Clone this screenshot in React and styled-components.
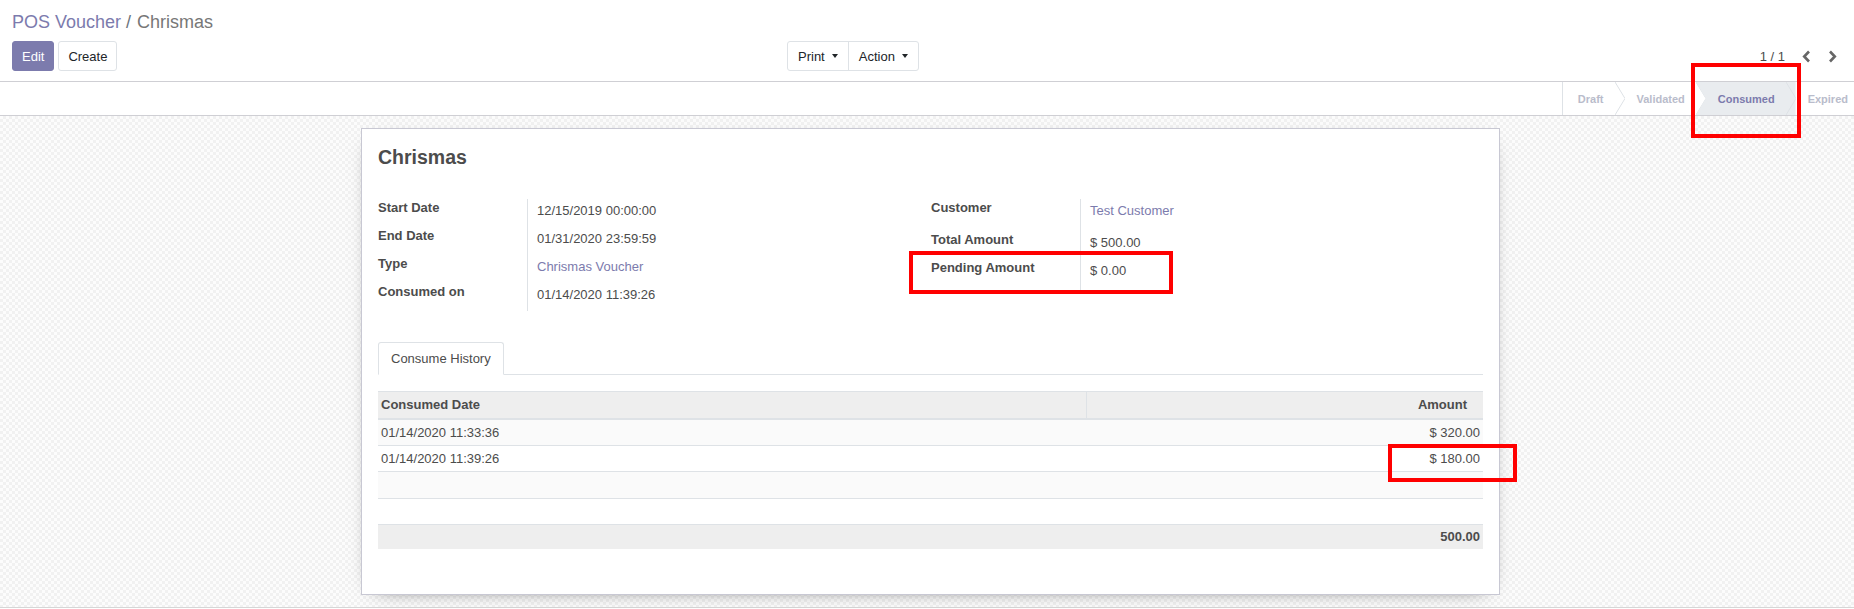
import styled, { createGlobalStyle } from "styled-components";

const GlobalStyle = createGlobalStyle`
  html, body {
    margin: 0;
    padding: 0;
    background: #fff;
  }
  body {
    font-family: "Liberation Sans", Arial, sans-serif;
    font-size: 13px;
    color: #4c4c4c;
  }
  * {
    box-sizing: border-box;
  }
`;

const leftFields = [
  { label: "Start Date", value: "12/15/2019 00:00:00" },
  { label: "End Date", value: "01/31/2020 23:59:59" },
  { label: "Type", value: "Chrismas Voucher", link: true },
  { label: "Consumed on", value: "01/14/2020 11:39:26" },
];

const rightFields = [
  { label: "Customer", value: "Test Customer", link: true, height: 32 },
  { label: "Total Amount", value: "$ 500.00", height: 28 },
  { label: "Pending Amount", value: "$ 0.00", height: 31 },
];

const history = [
  { date: "01/14/2020 11:33:36", amount: "$ 320.00" },
  { date: "01/14/2020 11:39:26", amount: "$ 180.00" },
  { date: "", amount: "" },
  { date: "", amount: "" },
];

const states = ["Draft", "Validated", "Consumed", "Expired"];

const Chevron = ({ dir }) => (
  <svg width="9" height="13" viewBox="0 0 9 13">
    <path
      d={dir === "left" ? "M7 1.5 L2.2 6.5 L7 11.5" : "M2 1.5 L6.8 6.5 L2 11.5"}
      fill="none"
      stroke="currentColor"
      strokeWidth="2.6"
    />
  </svg>
);

const App = () => {
  return (
    <Page>
      <GlobalStyle />
      <ControlPanel>
        <Breadcrumb>
          <CrumbLink>POS Voucher</CrumbLink>
          <CrumbSep>/</CrumbSep>
          <CrumbActive>Chrismas</CrumbActive>
        </Breadcrumb>
        <ButtonRow>
          <MainButtons>
            <Button $primary>Edit</Button>
            <Button>Create</Button>
          </MainButtons>
          <ButtonGroup>
            <GroupButton>Print</GroupButton>
            <GroupButton>Action</GroupButton>
          </ButtonGroup>
          <Pager>
            <PagerValue>1 / 1</PagerValue>
            <PagerButton>
              <Chevron dir="left" />
            </PagerButton>
            <PagerButton>
              <Chevron dir="right" />
            </PagerButton>
          </Pager>
        </ButtonRow>
      </ControlPanel>

      <StatusBar>
        <StatusList>
          {states.map((state, i) => (
            <StatusItem
              key={state}
              $first={i === 0}
              $last={i === states.length - 1}
              $active={state === "Consumed"}
            >
              <StatusLabel $active={state === "Consumed"}>{state}</StatusLabel>
              {i < states.length - 1 && (
                <svg width="10" height="33" viewBox="0 0 10 33">
                  <path
                    d="M0 0 L10 16.5 L0 33"
                    fill={state === "Consumed" ? "#e9ecef" : "none"}
                    stroke="#dee2e6"
                    strokeWidth="1"
                  />
                </svg>
              )}
            </StatusItem>
          ))}
        </StatusList>
      </StatusBar>

      <SheetBg>
        <Sheet>
          <Title>Chrismas</Title>
          <Groups>
            <FieldGroup>
              {leftFields.map((f) => (
                <FieldRow key={f.label} $height={28}>
                  <FieldLabel>{f.label}</FieldLabel>
                  <FieldValue $link={f.link}>{f.value}</FieldValue>
                </FieldRow>
              ))}
            </FieldGroup>
            <FieldGroup>
              {rightFields.map((f) => (
                <FieldRow key={f.label} $height={f.height}>
                  <FieldLabel>{f.label}</FieldLabel>
                  <FieldValue $link={f.link}>{f.value}</FieldValue>
                </FieldRow>
              ))}
            </FieldGroup>
          </Groups>

          <Tabs>
            <Tab>Consume History</Tab>
          </Tabs>

          <Table>
            <colgroup>
              <col style={{ width: "708px" }} />
              <col />
            </colgroup>
            <thead>
              <tr>
                <HeadCell>Consumed Date</HeadCell>
                <HeadCell $right $divider>
                  Amount
                </HeadCell>
              </tr>
            </thead>
            <tbody>
              {history.map((row, i) => (
                <BodyRow key={i} $striped={i % 2 === 0}>
                  <Cell>{row.date}</Cell>
                  <Cell $right>{row.amount}</Cell>
                </BodyRow>
              ))}
            </tbody>
            <tfoot>
              <FootRow>
                <Cell />
                <Cell $right $bold>
                  500.00
                </Cell>
              </FootRow>
            </tfoot>
          </Table>
        </Sheet>
      </SheetBg>

      <Highlight $left={1691} $top={63} $width={110} $height={75} />
      <Highlight $left={909} $top={251} $width={264} $height={43} />
      <Highlight $left={1388} $top={444} $width={129} $height={38} />
    </Page>
  );
};

const Page = styled.div`
  position: relative;
  width: 1854px;
  height: 609px;
  display: flex;
  flex-direction: column;
  overflow: hidden;
`;

const ControlPanel = styled.div`
  height: 82px;
  padding: 10px 13px 0 12px;
  border-bottom: 1px solid #cfcfd4;
`;

const Breadcrumb = styled.div`
  display: flex;
  align-items: center;
  height: 24px;
  font-size: 18px;
  line-height: 24px;
`;

const CrumbLink = styled.span`
  color: #7c7bad;
`;

const CrumbSep = styled.span`
  color: #6c757d;
  margin: 0 6px 0 5px;
`;

const CrumbActive = styled.span`
  color: #777777;
`;

const ButtonRow = styled.div`
  display: flex;
  align-items: center;
  margin-top: 7px;
  height: 30px;
`;

const MainButtons = styled.div`
  display: flex;
  gap: 4px;
  width: 775px;
`;

const Button = styled.button`
  height: 30px;
  padding: 0 9px;
  font-family: inherit;
  font-size: 13px;
  border-radius: 3px;
  border: 1px solid ${(p) => (p.$primary ? "#7c7bad" : "#dee2e6")};
  background: ${(p) => (p.$primary ? "#7c7bad" : "#ffffff")};
  color: ${(p) => (p.$primary ? "#ffffff" : "#212529")};
`;

const ButtonGroup = styled.div`
  display: flex;
  border: 1px solid #dee2e6;
  border-radius: 3px;
  height: 30px;
`;

const GroupButton = styled.div`
  display: flex;
  align-items: center;
  padding: 0 10px 0 10px;
  color: #212529;
  font-size: 13px;
  & + & {
    border-left: 1px solid #dee2e6;
  }
  &::after {
    content: "";
    margin-left: 7px;
    border-top: 4px solid #212529;
    border-left: 3.5px solid transparent;
    border-right: 3.5px solid transparent;
  }
`;

const Pager = styled.div`
  margin-left: auto;
  display: flex;
  align-items: center;
`;

const PagerValue = styled.span`
  color: #4c4c4c;
  font-size: 13px;
  margin-right: 13px;
`;

const PagerButton = styled.span`
  display: flex;
  align-items: center;
  color: #666666;
  padding: 0 4px;
  & + & {
    margin-left: 9px;
  }
`;

const StatusBar = styled.div`
  height: 34px;
  border-bottom: 1px solid #cfcfd4;
  display: flex;
  justify-content: flex-end;
`;

const StatusList = styled.div`
  display: flex;
  height: 33px;
`;

const StatusItem = styled.div`
  display: flex;
  align-items: center;
  height: 33px;
  padding-left: ${(p) => (p.$first ? "15px" : "22px")};
  padding-right: ${(p) => (p.$last ? "6px" : "0")};
  margin-left: ${(p) => (p.$first ? "0" : "-10px")};
  border-left: ${(p) => (p.$first ? "1px solid #dee2e6" : "none")};
  background: ${(p) => (p.$active ? "#e9ecef" : "transparent")};
  clip-path: ${(p) =>
    p.$active
      ? "polygon(0 0, 100% 0, 100% 100%, 0 100%, 10px 50%)"
      : "none"};
  svg {
    margin-left: 11px;
    display: block;
  }
`;

const StatusLabel = styled.span`
  font-size: 11px;
  font-weight: 700;
  color: ${(p) => (p.$active ? "#7c7bad" : "#b9bccb")};
`;

const SheetBg = styled.div`
  flex: 1;
  padding: 12px 0 0 7px;
  background-color: #f9f9f9;
  background-image: repeating-conic-gradient(#f1f1f1 0% 25%, #fcfcfc 0% 50%);
  background-size: 6px 6px;
  border-bottom: 1px solid #d6d6d6;
  margin-bottom: 1px;
`;

const Sheet = styled.div`
  width: 1139px;
  height: 467px;
  margin: 0 auto;
  background: #ffffff;
  border: 1px solid #c8c8d3;
  box-shadow: 0 5px 20px -15px #000;
  padding: 16px 16px 0 16px;
`;

const Title = styled.h1`
  margin: 0;
  font-size: 19.5px;
  line-height: 25px;
  font-weight: 700;
  color: #4c4c4c;
`;

const Groups = styled.div`
  display: grid;
  grid-template-columns: 553px 1fr;
  margin-top: 29px;
`;

const FieldGroup = styled.div`
  display: flex;
  flex-direction: column;
`;

const FieldRow = styled.div`
  display: grid;
  grid-template-columns: 150px 1fr;
  height: ${(p) => p.$height}px;
`;

const FieldLabel = styled.div`
  font-weight: 700;
  color: #4c4c4c;
  line-height: 18px;
  padding-top: 0;
  border-right: 1px solid #dee2e6;
`;

const FieldValue = styled.div`
  padding: 3px 0 0 9px;
  line-height: 18px;
  color: ${(p) => (p.$link ? "#7c7bad" : "#4c4c4c")};
`;

const Tabs = styled.div`
  display: flex;
  margin-top: 31px;
  border-bottom: 1px solid #dee2e6;
`;

const Tab = styled.div`
  padding: 6px 12px 5px;
  line-height: 20px;
  margin-bottom: -1px;
  border: 1px solid #dee2e6;
  border-bottom-color: #ffffff;
  border-radius: 3px 3px 0 0;
  background: #ffffff;
  color: #4c4c4c;
`;

const Table = styled.table`
  width: 100%;
  margin-top: 16px;
  border-collapse: collapse;
  table-layout: fixed;
`;

const HeadCell = styled.th`
  height: 27px;
  padding: 0 ${(p) => (p.$right ? "16px" : "3px")} 0 3px;
  text-align: ${(p) => (p.$right ? "right" : "left")};
  font-weight: 700;
  background: #eeeeee;
  border-top: 1px solid #dee2e6;
  border-bottom: 2px solid #dee2e6;
  border-left: ${(p) => (p.$divider ? "1px solid #dee2e6" : "none")};
  color: #4c4c4c;
`;

const BodyRow = styled.tr`
  height: 26.5px;
  background: ${(p) => (p.$striped ? "#fafafa" : "#ffffff")};
  border-top: 1px solid #dee2e6;
`;

const Cell = styled.td`
  padding: 0 3px;
  text-align: ${(p) => (p.$right ? "right" : "left")};
  font-weight: ${(p) => (p.$bold ? 700 : 400)};
  color: #4c4c4c;
`;

const FootRow = styled.tr`
  height: 24px;
  background: #eeeeee;
  border-top: 1px solid #dee2e6;
`;

const Highlight = styled.div`
  position: absolute;
  left: ${(p) => p.$left}px;
  top: ${(p) => p.$top}px;
  width: ${(p) => p.$width}px;
  height: ${(p) => p.$height}px;
  border: 4px solid #ff0000;
  pointer-events: none;
`;

export default App;
